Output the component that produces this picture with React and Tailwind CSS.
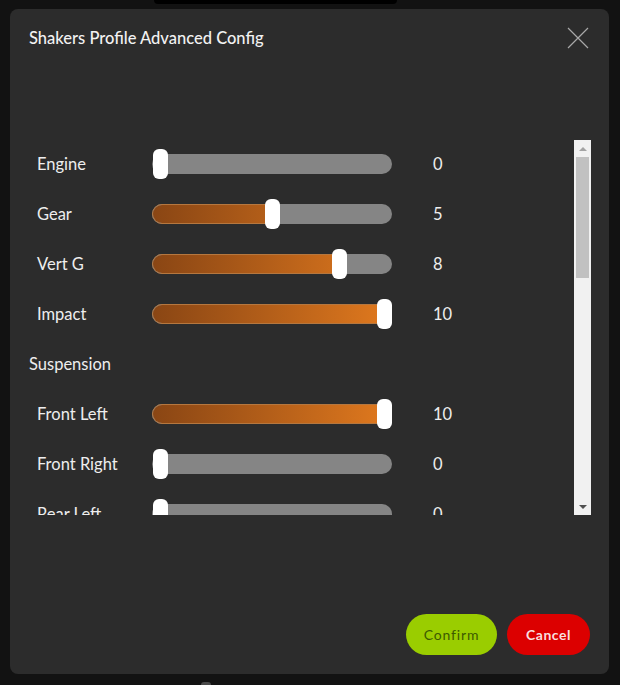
import React from 'react';

const rows = [
  { label: 'Engine', value: 0 },
  { label: 'Gear', value: 5 },
  { label: 'Vert G', value: 8 },
  { label: 'Impact', value: 10 },
  { section: 'Suspension' },
  { label: 'Front Left', value: 10 },
  { label: 'Front Right', value: 0 },
  { label: 'Rear Left', value: 0 },
];

function Slider({ value }) {
  // thumb centre travels 8px..232px across the 240px track
  const pos = 8 + (value / 10) * 224;
  return (
    <div className="relative w-[240px] h-[20px] rounded-full bg-[#858585]">
      {value > 0 && (
        <div
          className="absolute left-0 top-0 h-full overflow-hidden rounded-l-full border border-[#b5773f]"
          style={{ width: pos + 2 }}
        >
          <div className="w-[240px] h-full bg-gradient-to-r from-[#8a4614] to-[#e27a1e]" />
        </div>
      )}
      <div
        className="absolute top-[-5px] w-[15px] h-[30px] rounded-md bg-white"
        style={{ left: pos - 7.5 }}
      />
    </div>
  );
}

export default function App() {
  return (
    <div className="relative w-[620px] h-[685px] bg-[#121212] overflow-hidden pt-[9px] pl-[10px]" style={{ fontFamily: 'Lato, "Open Sans", sans-serif' }}>
      <div className="absolute left-[154px] top-0 w-[243px] h-[4px] bg-black rounded-b" />
      <div className="absolute left-[201px] top-[682px] w-[10px] h-[3px] bg-[#4a4a4a] rounded-t" />

      <div className="w-[599px] h-[665px] rounded-lg bg-[#2c2c2c] flex flex-col">
        {/* header */}
        <div className="h-[58px] flex items-center justify-between pl-[19px] pr-[19px]">
          <span className="text-[16.5px] text-[#f2f2f2] font-medium">Shakers Profile Advanced Config</span>
          <svg width="22" height="22" viewBox="0 0 22 22" className="mr-[1px]">
            <path d="M1 1 L21 21 M21 1 L1 21" stroke="#a8a8a8" strokeWidth="1.2" />
          </svg>
        </div>

        {/* body */}
        <div className="mt-[72px] flex h-[376px]">
          <div className="w-[564px] pl-[19px] overflow-hidden">
            {rows.map((r, i) =>
              r.section ? (
                <div key={i} className="h-[50px] flex items-center text-[16.5px] text-[#eeeeee]">{r.section}</div>
              ) : (
                <div key={i} className="h-[50px] flex items-center pl-[8px]">
                  <span className="w-[115px] text-[16.5px] text-[#eeeeee]">{r.label}</span>
                  <Slider value={r.value} />
                  <span className="ml-[41px] text-[16.5px] text-[#eeeeee]">{r.value}</span>
                </div>
              )
            )}
          </div>
          {/* scrollbar */}
          <div className="mt-[1px] w-[17px] h-[375px] bg-[#f1f1f1] flex flex-col items-center">
            <div className="h-[17px] flex items-center justify-center">
              <div className="w-0 h-0 border-l-[4px] border-r-[4px] border-b-[4px] border-l-transparent border-r-transparent border-b-[#a3a3a3]" />
            </div>
            <div className="w-[13px] h-[121px] bg-[#c1c1c1]" />
            <div className="flex-1" />
            <div className="h-[17px] flex items-center justify-center">
              <div className="w-0 h-0 border-l-[4px] border-r-[4px] border-t-[4px] border-l-transparent border-r-transparent border-t-[#505050]" />
            </div>
          </div>
        </div>

        <div className="flex-1" />

        {/* footer */}
        <div className="flex justify-end gap-[10px] pr-[19px] pb-[19px]">
          <button className="w-[91px] h-[41px] rounded-full bg-[#9acd00] text-[#3d5a00] text-[14px] tracking-[0.06em]">Confirm</button>
          <button className="w-[83px] h-[41px] rounded-full bg-[#dc0000] text-[#f8dede] text-[14px] font-bold tracking-[0.04em]">Cancel</button>
        </div>
      </div>
    </div>
  );
}
